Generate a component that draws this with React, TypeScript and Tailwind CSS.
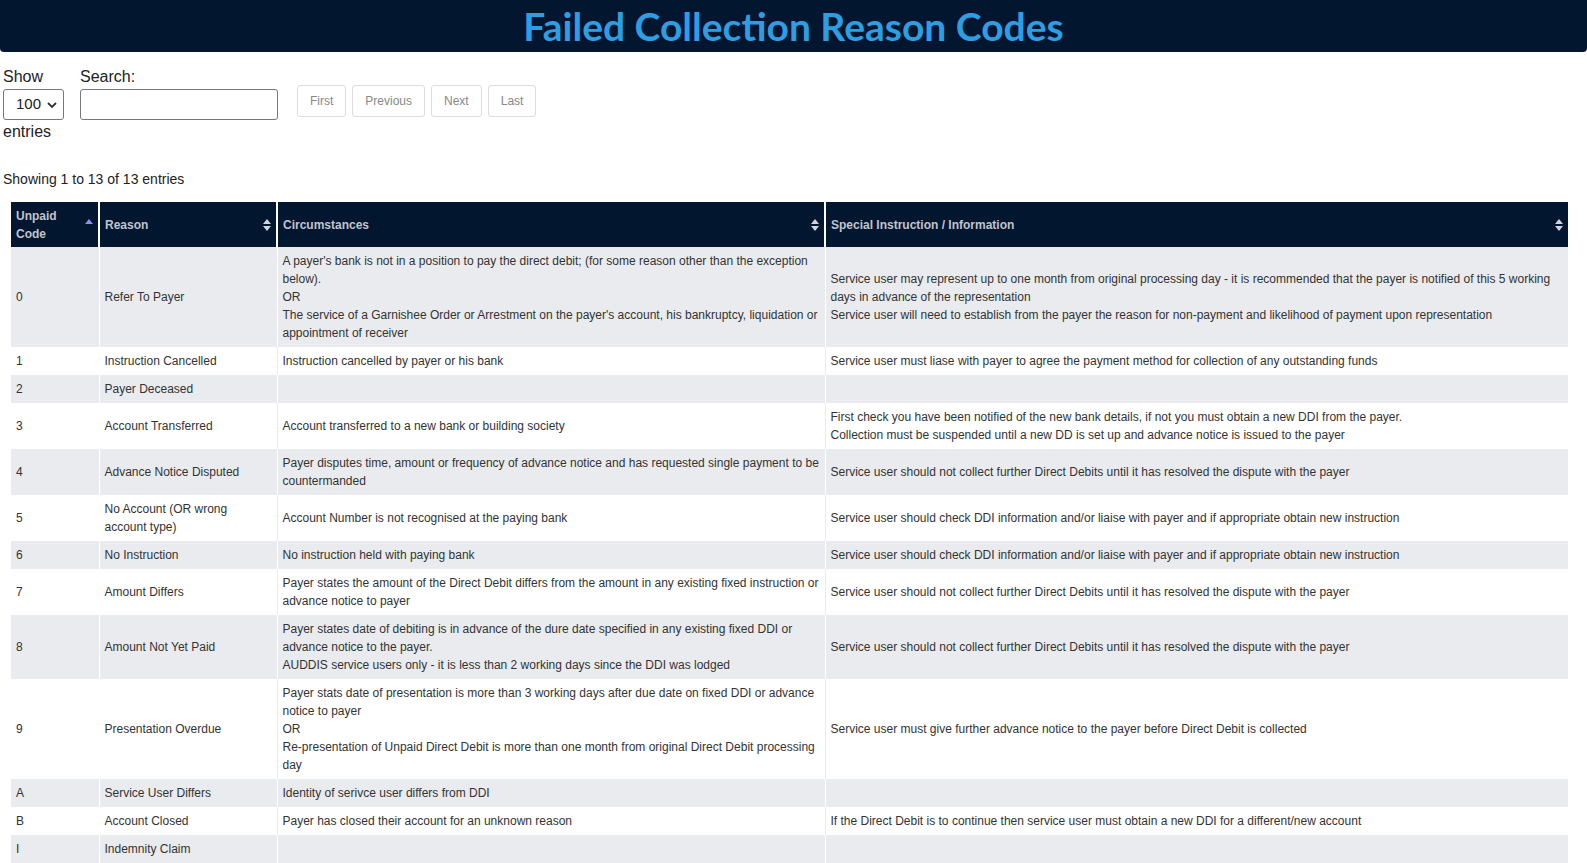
const rows: [string, string, string[], string[]][] = [
  ["0", "Refer To Payer", ["A payer's bank is not in a position to pay the direct debit; (for some reason other than the exception below).", "OR", "The service of a Garnishee Order or Arrestment on the payer's account, his bankruptcy, liquidation or appointment of receiver"], ["Service user may represent up to one month from original processing day - it is recommended that the payer is notified of this 5 working days in advance of the representation", "Service user will need to establish from the payer the reason for non-payment and likelihood of payment upon representation"]],
  ["1", "Instruction Cancelled", ["Instruction cancelled by payer or his bank"], ["Service user must liase with payer to agree the payment method for collection of any outstanding funds"]],
  ["2", "Payer Deceased", [], []],
  ["3", "Account Transferred", ["Account transferred to a new bank or building society"], ["First check you have been notified of the new bank details, if not you must obtain a new DDI from the payer.", "Collection must be suspended until a new DD is set up and advance notice is issued to the payer"]],
  ["4", "Advance Notice Disputed", ["Payer disputes time, amount or frequency of advance notice and has requested single payment to be countermanded"], ["Service user should not collect further Direct Debits until it has resolved the dispute with the payer"]],
  ["5", "No Account (OR wrong account type)", ["Account Number is not recognised at the paying bank"], ["Service user should check DDI information and/or liaise with payer and if appropriate obtain new instruction"]],
  ["6", "No Instruction", ["No instruction held with paying bank"], ["Service user should check DDI information and/or liaise with payer and if appropriate obtain new instruction"]],
  ["7", "Amount Differs", ["Payer states the amount of the Direct Debit differs from the amount in any existing fixed instruction or advance notice to payer"], ["Service user should not collect further Direct Debits until it has resolved the dispute with the payer"]],
  ["8", "Amount Not Yet Paid", ["Payer states date of debiting is in advance of the dure date specified in any existing fixed DDI or advance notice to the payer.", "AUDDIS service users only - it is less than 2 working days since the DDI was lodged"], ["Service user should not collect further Direct Debits until it has resolved the dispute with the payer"]],
  ["9", "Presentation Overdue", ["Payer stats date of presentation is more than 3 working days after due date on fixed DDI or advance notice to payer", "OR", "Re-presentation of Unpaid Direct Debit is more than one month from original Direct Debit processing day"], ["Service user must give further advance notice to the payer before Direct Debit is collected"]],
  ["A", "Service User Differs", ["Identity of serivce user differs from DDI"], []],
  ["B", "Account Closed", ["Payer has closed their account for an unknown reason"], ["If the Direct Debit is to continue then service user must obtain a new DDI for a different/new account"]],
  ["I", "Indemnity Claim", [], []],
];

function Sort({ up }: { up?: boolean }) {
  return (
    <svg width="8" height="14" viewBox="0 0 8 14" className="shrink-0">
      {up ? (
        <path d="M0 6 L4 1 L8 6 Z" fill="#8b8ff0" />
      ) : (
        <>
          <path d="M0 6 L4 1 L8 6 Z" fill="#d0d4dc" />
          <path d="M0 8 L4 13 L8 8 Z" fill="#d0d4dc" />
        </>
      )}
    </svg>
  );
}

export default function App() {
  return (
    <div className="w-[1587px] h-[863px] overflow-hidden bg-white" style={{ fontFamily: "'Liberation Sans', Arial, sans-serif" }}>
      <div className="h-[52px] bg-[#03162f] rounded-b-[4px] flex items-center justify-center">
        <h1 className="text-[39px] font-bold text-[#2e9ee3] leading-none" style={{ fontFamily: "Lato, sans-serif" }}>Failed Collection Reason Codes</h1>
      </div>
      <div className="flex pl-[3px] pt-[16px] text-[16px] text-[#222]">
        <div className="w-[77px]">
          <div className="leading-[18px]">Show</div>
          <div className="mt-[3px] w-[61px] h-[31px] border border-[#777] rounded-[3px] flex items-center justify-between pl-[12px] pr-[6px] text-[15px]">
            100
            <svg width="10" height="8" viewBox="0 0 10 8"><path d="M1 2 L5 6 L9 2" fill="none" stroke="#333" strokeWidth="1.8" /></svg>
          </div>
          <div className="mt-[3px] leading-[18px]">entries</div>
        </div>
        <div>
          <div className="leading-[18px]">Search:</div>
          <div className="mt-[3px] w-[198px] h-[31px] border border-[#777] rounded-[3px]" />
        </div>
        <div className="flex gap-[6px] ml-[19px] mt-[17px] h-[32px] text-[12px] text-[#888]">
          {["First", "Previous", "Next", "Last"].map((b) => (
            <div key={b} className="px-[12px] border border-[#ddd] rounded-[3px] flex items-center">{b}</div>
          ))}
        </div>
      </div>
      <div className="pl-[3px] mt-[29px] text-[14px] text-[#222] leading-[18px]">Showing 1 to 13 of 13 entries</div>
      <table className="ml-[11px] mt-[14px] w-[1557px] min-w-[1557px] border-collapse text-[12px] text-[#333] leading-[18px] table-fixed">
        <colgroup>
          <col className="w-[88px]" />
          <col className="w-[178px]" />
          <col className="w-[548px]" />
          <col className="w-[743px]" />
        </colgroup>
        <thead>
          <tr className="bg-[#03162f] text-[#c0c4cc] font-bold h-[45px]">
            <th className="w-[88px] text-left font-bold px-[5px] border-r-2 border-white">
              <div className="flex items-center justify-between"><span>Unpaid<br />Code</span><Sort up /></div>
            </th>
            <th className="w-[178px] text-left font-bold px-[5px] border-r-2 border-white"><div className="flex items-center justify-between"><span>Reason</span><Sort /></div></th>
            <th className="w-[548px] text-left font-bold px-[5px] border-r-2 border-white"><div className="flex items-center justify-between"><span>Circumstances</span><Sort /></div></th>
            <th className="w-[743px] text-left font-bold px-[5px]"><div className="flex items-center justify-between"><span>Special Instruction / Information</span><Sort /></div></th>
          </tr>
        </thead>
        <tbody>
          {rows.map((r, i) => (
            <tr key={r[0]} className={i % 2 === 0 ? "bg-[#e9ebee]" : "bg-white"}>
              <td className="px-[5px] py-[5px] align-middle border-r border-white">{r[0]}</td>
              <td className={"px-[5px] py-[5px] align-middle border-r " + (i % 2 === 0 ? "border-white" : "border-[#e9ebee]")}>{r[1]}</td>
              <td className={"px-[5px] py-[5px] align-middle border-r " + (i % 2 === 0 ? "border-white" : "border-[#e9ebee]")}>{r[2].map((t, j) => <div key={j}>{t}</div>)}</td>
              <td className="px-[5px] py-[5px] align-middle">{r[3].map((t, j) => <div key={j}>{t}</div>)}</td>
            </tr>
          ))}
        </tbody>
      </table>
      <div className="ml-[11px] w-[1557px] h-px bg-[#111]" />
    </div>
  );
}
